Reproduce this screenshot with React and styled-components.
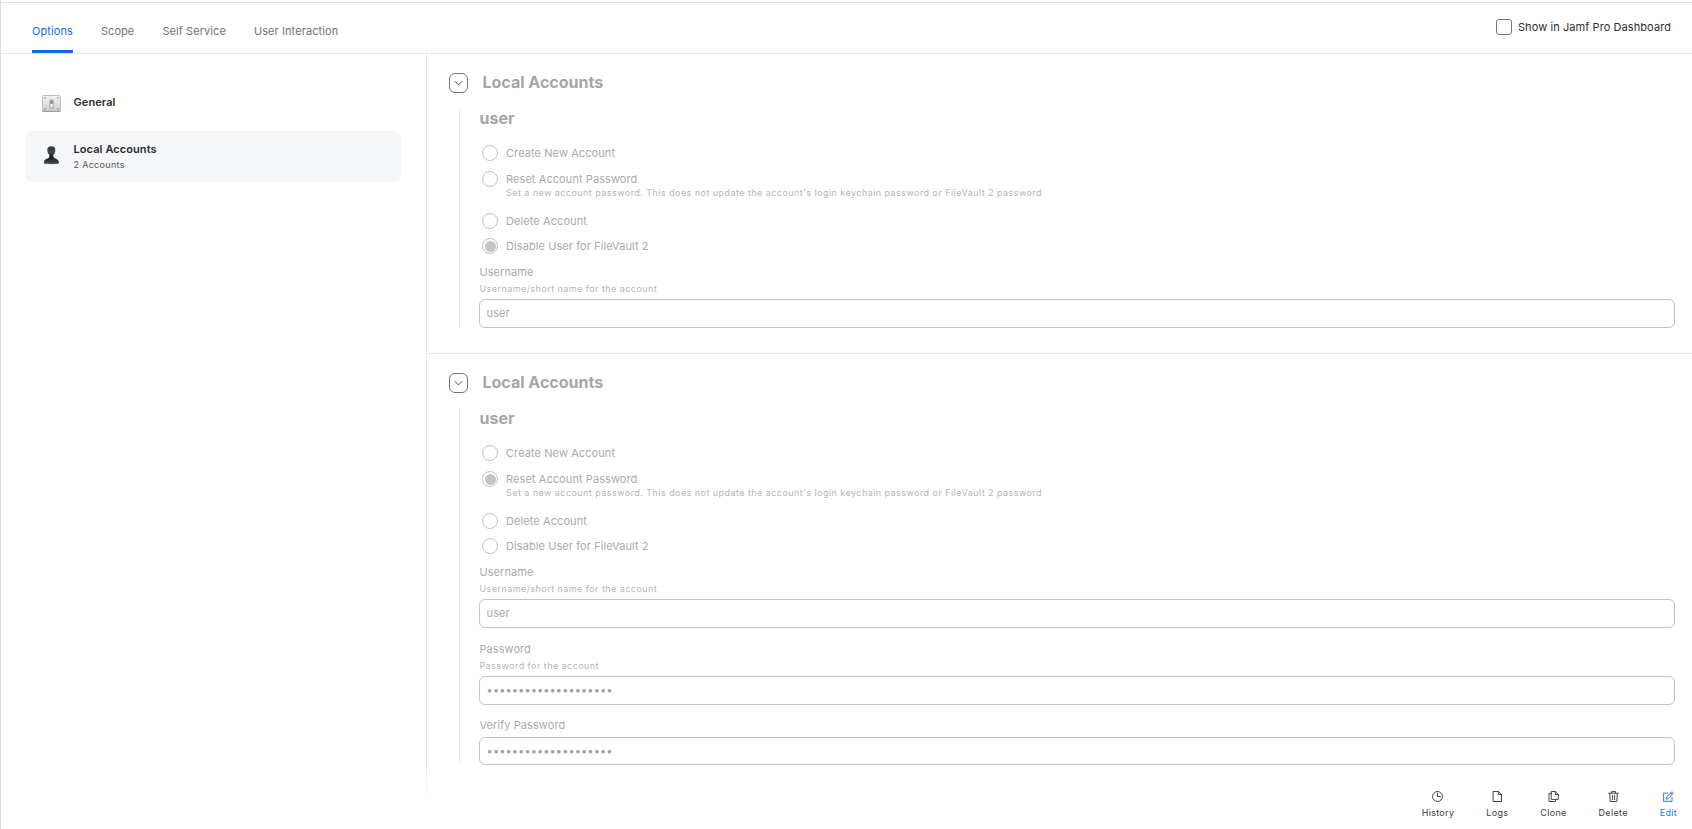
import React, { useState } from 'react'
import styled, { createGlobalStyle, css } from 'styled-components'

const color = {
  blue: '#1268f0',
  text: '#2c2d2f',
  tab: '#717274',
  line: '#e6e7e8',
  selected: '#f5f6f8',
  heading: '#a5a6a6',
  disabled: '#a9aaab',
  hint: '#b4b5b6',
  field: '#c2c3c4',
}

const GlobalStyle = createGlobalStyle`
  * {
    box-sizing: border-box;
  }

  body {
    margin: 0;
    background: #fff;
    color: ${color.text};
    font-family: Inter, 'Liberation Sans', sans-serif;
    font-size: 11px;
    line-height: 14px;
    letter-spacing: 0.08px;
  }

  h2, h3, p {
    margin: 0;
  }

  button, input {
    font: inherit;
    letter-spacing: inherit;
  }
`

const Page = styled.div`
  position: relative;
  display: flex;
  flex-direction: column;
  height: 829px;
  padding-top: 2px;
  border-left: 1px solid #dadde2;
  overflow: hidden;
`

const TopBar = styled.header`
  display: flex;
  justify-content: space-between;
  height: 52px;
  padding: 0 21px 0 31px;
  border-top: 1px solid #e0e2e4;
  border-bottom: 1px solid ${color.line};
`

const Tabs = styled.nav`
  display: flex;
  gap: 28px;
`

const Tab = styled.button`
  height: 50px;
  padding: 9px 0 0;
  border: 0;
  border-bottom: 3px solid transparent;
  background: none;
  color: ${color.tab};

  ${props => props.$active && css`
    border-bottom-color: ${color.blue};
    color: ${color.blue};
  `}
`

const Dashboard = styled.label`
  display: flex;
  align-items: center;
  gap: 6px;
  height: 48px;
`

const Checkbox = styled.input`
  appearance: none;
  width: 16px;
  height: 16px;
  margin: 0;
  border: 1px solid #75777a;
  border-radius: 3px;
  background: #fff;
`

const Body = styled.div`
  display: flex;
  flex: 1;
`

const Sidebar = styled.aside`
  width: 426px;
  padding: 26px 25px 0;
  border-right: 1px solid ${color.line};
`

const Item = styled.div`
  display: flex;
  align-items: center;
  gap: 11.5px;
  height: 44px;
  margin-bottom: 7px;
  padding: 0 16px;
  border-radius: 6px;

  ${props => props.$active && css`
    height: 51px;
    background: ${color.selected};
  `}
`

const ItemTitle = styled.p`
  font-weight: 600;
`

const ItemNote = styled.p`
  margin-top: 3px;
  font-size: 9px;
  line-height: 12px;
  letter-spacing: 0.31px;
  color: #56585b;
`

const Main = styled.main`
  flex: 1;
`

const Section = styled.section`
  padding: 19px 17px 25px 22px;

  & + & {
    border-top: 1px solid ${color.line};
  }
`

const SectionHead = styled.div`
  display: flex;
  gap: 14.5px;
  height: 20px;
`

const Toggle = styled.button`
  display: flex;
  align-items: center;
  justify-content: center;
  width: 19px;
  height: 20px;
  padding: 0;
  border: 1px solid #737578;
  border-radius: 6px;
  background: #fff;
`

const Title = styled.h2`
  font-size: 16px;
  line-height: 18px;
  letter-spacing: 0;
  color: ${color.heading};
`

const Account = styled.div`
  margin: 16px 0 0 10px;
  padding-left: 19px;
  border-left: 1px solid ${color.line};
`

const AccountName = styled.h3`
  margin-bottom: 18px;
  padding-left: 0.5px;
  font-size: 16px;
  line-height: 18px;
  letter-spacing: 0;
  color: ${color.heading};
`

const Option = styled.label`
  display: flex;
  align-items: center;
  gap: 8px;
  height: 16px;
  margin: ${props => props.$space || 0}px 0 0 3px;
  color: ${color.disabled};
`

const Radio = styled.input`
  appearance: none;
  width: 16px;
  height: 16px;
  margin: 0;
  border: 1px solid ${color.field};
  border-radius: 50%;
  background: #fff;

  &:checked {
    padding: 1.5px;
    background: #c4c5c6 content-box;
  }
`

const Hint = styled.p`
  font-size: 9px;
  line-height: 12px;
  letter-spacing: 0.445px;
  color: ${color.hint};
`

const OptionHint = styled(Hint)`
  padding-left: 27px;
`

const Field = styled.label`
  display: block;
  margin-top: ${props => props.$space}px;
  color: ${color.disabled};

  ${Hint} {
    margin-top: 4px;
  }
`

const FieldText = styled.div`
  padding-left: 0.4px;
`

const Input = styled.input`
  display: block;
  width: 100%;
  height: ${props => props.$compact ? 28 : 29}px;
  margin-top: ${props => props.$compact ? 5 : 4}px;
  padding: 0 6.6px ${props => props.$compact ? 0 : 1}px;
  border: 1px solid ${color.field};
  border-radius: 6px;
  background: #fff;
  color: ${color.disabled};

  &[type='password'] {
    letter-spacing: 0.11px;
    color: #9fa0a1;
  }
`

const Footer = styled.footer`
  position: absolute;
  right: 0;
  bottom: 0;
  left: 0;
  display: flex;
  justify-content: flex-end;
  gap: 32px;
  height: 63px;
  padding: 25px 15px 0 0;
  background: linear-gradient(rgba(255, 255, 255, 0), #fff 36px);
`

const Action = styled.button`
  display: flex;
  flex-direction: column;
  align-items: center;
  gap: 5px;
  height: 28px;
  padding: 0;
  border: 0;
  background: none;
  font-size: 9px;
  line-height: 12px;
  letter-spacing: 0.31px;
  color: ${props => props.$primary ? '#2a72ee' : '#3a3c3f'};
`

const ActionSvg = styled.svg`
  display: block;
  width: 11px;
  height: 11px;
  fill: none;
  stroke: currentColor;
  stroke-linejoin: round;
  stroke-linecap: round;
`

const actionPaths = {
  History: 'M5.5 .5a5 5 0 1 0 0 10a5 5 0 1 0 0-10M5.5 2.5v3h3',
  Logs: 'M1.5 .5H6.4L9.5 3.6V10.5H1.5ZM6.4 .5V3.6H9.5',
  Clone: 'M3.6 .5H7.3L10.3 3.5V8.4H3.6ZM7.3 .5V3.5H10.3M3.4 2.4H1V10.5H7.6V8.6',
  Delete: 'M.8 2.2H10.2M3.6 2V.6H7.4V2M1.7 2.4L2.2 10.5H8.8L9.3 2.4M4.4 4.3V8.6M6.6 4.3V8.6',
  Edit: 'M5 2.1H.6V10.4H9V6.2M3.4 7.8L3.8 5.8L8.9.7L10.5 2.3L5.4 7.4ZM7.7 1.9L9.3 3.5',
}

const ActionIcon = ({ name }) => (
  <ActionSvg viewBox='0 0 11 11'>
    <path d={actionPaths[name]} strokeWidth='0.95' />
  </ActionSvg>
)

const Chevron = () => (
  <svg width='9' height='6' viewBox='0 0 9 6' fill='none'>
    <path d='M.8 1.2L4.5 4.9L8.2 1.2' stroke='#4c4e51' strokeWidth='1' />
  </svg>
)

const SwitchIcon = () => (
  <svg width='20' height='20' viewBox='0 0 20 20'>
    <defs>
      <linearGradient id='plate' x1='0' y1='0' x2='0' y2='1'>
        <stop offset='0' stopColor='#f4f4f4' />
        <stop offset='1' stopColor='#cdcdcd' />
      </linearGradient>
      <linearGradient id='knob' x1='0' y1='0' x2='0' y2='1'>
        <stop offset='0' stopColor='#c2c2c2' />
        <stop offset='1' stopColor='#a6a6a6' />
      </linearGradient>
    </defs>
    <rect x='.5' y='3.5' width='18' height='16' rx='1' fill='url(#plate)' stroke='#bcbcbc' />
    <path d='M.5 19.3H18.5' stroke='#989898' />
    <g fill='#808080'>
      <circle cx='3' cy='5.8' r='.8' />
      <circle cx='16' cy='5.8' r='.8' />
      <circle cx='3' cy='17' r='.8' />
      <circle cx='16' cy='17' r='.8' />
    </g>
    <rect x='7.3' y='7.2' width='4.6' height='9.4' rx='1.6' fill='url(#knob)' />
    <rect x='8.4' y='8.2' width='2.2' height='4' rx='.8' fill='#8c8c8c' />
    <rect x='8.4' y='11.8' width='2.4' height='3.6' rx='.8' fill='#eee' />
  </svg>
)

const PersonIcon = () => (
  <svg width='20' height='20' viewBox='0 1 20 20' overflow='visible'>
    <defs>
      <linearGradient id='person' x1='0' y1='0' x2='0' y2='1'>
        <stop offset='0' stopColor='#303234' />
        <stop offset='.3' stopColor='#4a4b4d' />
        <stop offset='.6' stopColor='#1d1e20' />
        <stop offset='.85' stopColor='#37383a' />
        <stop offset='1' stopColor='#55575a' />
      </linearGradient>
    </defs>
    <path
      d='M9.3 .3C6.7 .3 5.2 1.6 5.3 3.9C5.4 6.2 6.2 7.7 7.3 8.7C7.4 10.1 7.3 11.3 6.4 11.9C4.2 13 1.9 13.3 1.8 17.3C4 18.5 15 18.5 17.1 17.3C16.9 13.3 14.6 13 12.4 11.9C11.4 11.3 11.3 10.1 11.4 8.7C12.5 7.7 13.2 6.2 13.3 3.9C13.4 1.6 12 .3 9.3 .3Z'
      fill='url(#person)'
    />
  </svg>
)

const tabs = ['Options', 'Scope', 'Self Service', 'User Interaction']

const options = [
  { label: 'Create New Account' },
  {
    label: 'Reset Account Password',
    space: 10,
    hint: "Set a new account password. This does not update the account's login keychain password or FileVault 2 password",
  },
  { label: 'Delete Account', space: 14 },
  { label: 'Disable User for FileVault 2', space: 9 },
]

const LocalAccount = ({ id, selected, children }) => (
  <Section>
    <SectionHead>
      <Toggle><Chevron /></Toggle>
      <Title>Local Accounts</Title>
    </SectionHead>
    <Account>
      <AccountName>user</AccountName>
      {options.map(({ label, space, hint }) => (
        <React.Fragment key={label}>
          <Option $space={space}>
            <Radio type='radio' name={id} checked={label === selected} disabled readOnly />
            {label}
          </Option>
          {hint && <OptionHint>{hint}</OptionHint>}
        </React.Fragment>
      ))}
      <Field $space={11}>
        <FieldText>
          Username
          <Hint>Username/short name for the account</Hint>
        </FieldText>
        <Input value='user' disabled readOnly />
      </Field>
      {children}
    </Account>
  </Section>
)

const App = () => {
  const [activeTab, setActiveTab] = useState('Options')
  const password = 'x'.repeat(20)

  return (
    <Page>
      <GlobalStyle />
      <TopBar>
        <Tabs>
          {tabs.map(tab => (
            <Tab key={tab} $active={tab === activeTab} onClick={() => setActiveTab(tab)}>{tab}</Tab>
          ))}
        </Tabs>
        <Dashboard>
          <Checkbox type='checkbox' />
          Show in Jamf Pro Dashboard
        </Dashboard>
      </TopBar>

      <Body>
        <Sidebar>
          <Item>
            <SwitchIcon />
            <ItemTitle>General</ItemTitle>
          </Item>
          <Item $active>
            <PersonIcon />
            <div>
              <ItemTitle>Local Accounts</ItemTitle>
              <ItemNote>2 Accounts</ItemNote>
            </div>
          </Item>
        </Sidebar>

        <Main>
          <LocalAccount id='first' selected='Disable User for FileVault 2' />
          <LocalAccount id='second' selected='Reset Account Password'>
            <Field $space={14}>
              <FieldText>
                Password
                <Hint>Password for the account</Hint>
              </FieldText>
              <Input type='password' value={password} disabled readOnly />
            </Field>
            <Field $space={13}>
              <FieldText>Verify Password</FieldText>
              <Input type='password' value={password} $compact disabled readOnly />
            </Field>
          </LocalAccount>
        </Main>
      </Body>

      <Footer>
        {Object.keys(actionPaths).map(name => (
          <Action key={name} $primary={name === 'Edit'}>
            <ActionIcon name={name} />
            {name}
          </Action>
        ))}
      </Footer>
    </Page>
  )
}

export default App
